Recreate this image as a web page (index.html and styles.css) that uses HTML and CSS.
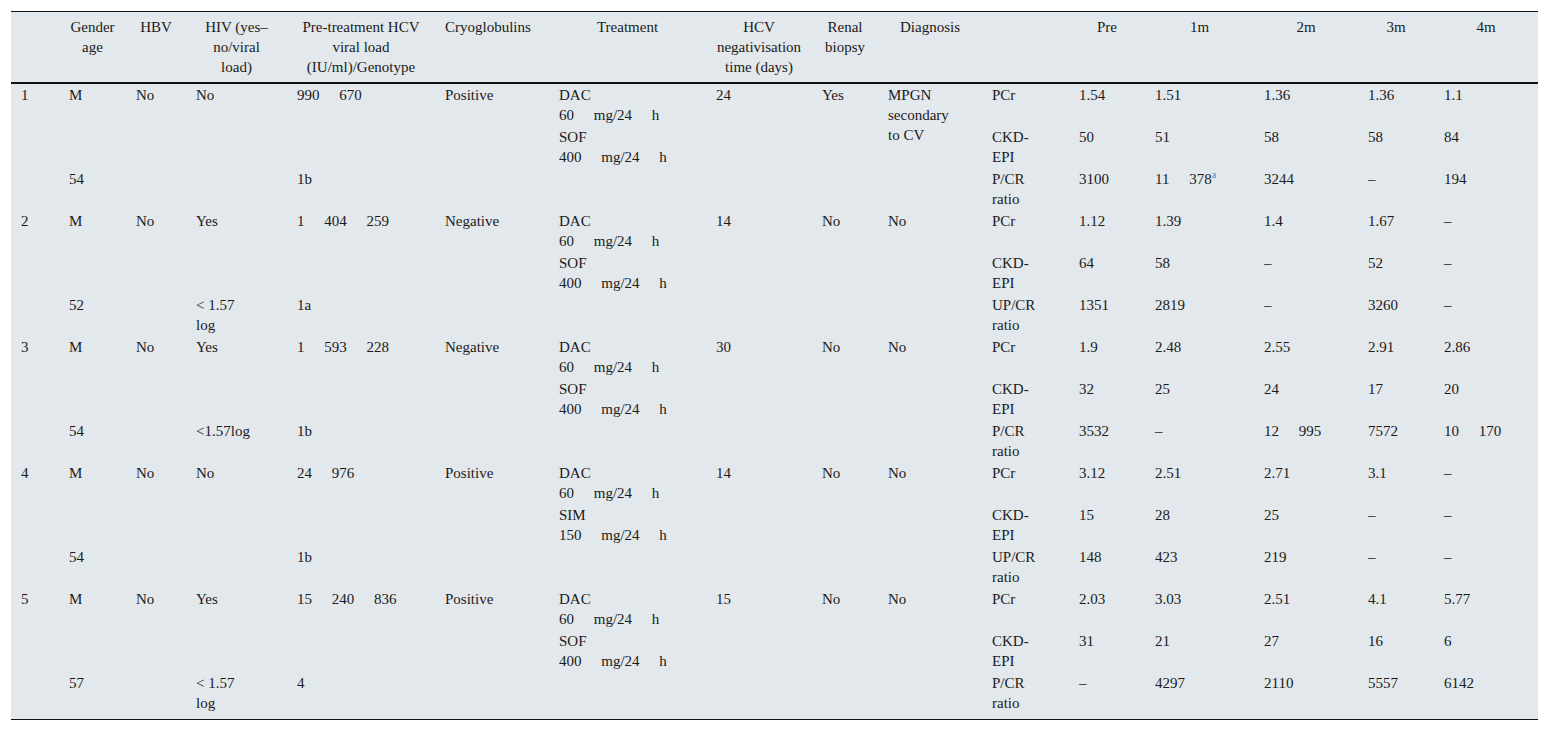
FILE: index.html
```html
<!DOCTYPE html>
<html lang="en">
<head>
<meta charset="utf-8">
<title>Table</title>
<link rel="stylesheet" href="styles.css">
</head>
<body>
<div class="wrap">
<table class="tbl">
<colgroup>
<col style="width:48px"><col style="width:67px"><col style="width:60px"><col style="width:101px"><col style="width:148px"><col style="width:114px"><col style="width:157px"><col style="width:106px"><col style="width:66px"><col style="width:104px"><col style="width:87px"><col style="width:76px"><col style="width:109px"><col style="width:104px"><col style="width:76px"><col style="width:104px">
</colgroup>
<thead>
<tr>
<th></th>
<th>Gender<br>age</th>
<th>HBV</th>
<th>HIV (yes–<br>no/viral<br>load)</th>
<th>Pre-treatment HCV<br>viral load<br>(IU/ml)/Genotype</th>
<th class="left">Cryoglobulins</th>
<th>Treatment</th>
<th>HCV<br>negativisation<br>time (days)</th>
<th>Renal<br>biopsy</th>
<th>Diagnosis</th>
<th></th>
<th>Pre</th>
<th>1m</th>
<th>2m</th>
<th>3m</th>
<th>4m</th>
</tr>
</thead>
<tbody>
<!-- Patient 1 -->
<tr>
<td>1</td><td>M</td><td>No</td><td>No</td><td class="sp">990 670</td><td>Positive</td><td class="sp">DAC<br>60 mg/24 h</td><td>24</td><td>Yes</td><td rowspan="2">MPGN<br>secondary<br>to CV</td><td>PCr</td><td>1.54</td><td>1.51</td><td>1.36</td><td>1.36</td><td>1.1</td>
</tr>
<tr>
<td></td><td></td><td></td><td></td><td></td><td></td><td class="sp">SOF<br>400 mg/24 h</td><td></td><td></td><td>CKD-<br>EPI</td><td>50</td><td>51</td><td>58</td><td>58</td><td>84</td>
</tr>
<tr>
<td></td><td>54</td><td></td><td></td><td>1b</td><td></td><td></td><td></td><td></td><td></td><td>P/CR<br>ratio</td><td>3100</td><td class="sp">11 378<sup class="ref">a</sup></td><td>3244</td><td>–</td><td>194</td>
</tr>
<!-- Patient 2 -->
<tr>
<td>2</td><td>M</td><td>No</td><td>Yes</td><td class="sp">1 404 259</td><td>Negative</td><td class="sp">DAC<br>60 mg/24 h</td><td>14</td><td>No</td><td>No</td><td>PCr</td><td>1.12</td><td>1.39</td><td>1.4</td><td>1.67</td><td>–</td>
</tr>
<tr>
<td></td><td></td><td></td><td></td><td></td><td></td><td class="sp">SOF<br>400 mg/24 h</td><td></td><td></td><td></td><td>CKD-<br>EPI</td><td>64</td><td>58</td><td>–</td><td>52</td><td>–</td>
</tr>
<tr>
<td></td><td>52</td><td></td><td>&lt; 1.57<br>log</td><td>1a</td><td></td><td></td><td></td><td></td><td></td><td>UP/CR<br>ratio</td><td>1351</td><td>2819</td><td>–</td><td>3260</td><td>–</td>
</tr>
<!-- Patient 3 -->
<tr>
<td>3</td><td>M</td><td>No</td><td>Yes</td><td class="sp">1 593 228</td><td>Negative</td><td class="sp">DAC<br>60 mg/24 h</td><td>30</td><td>No</td><td>No</td><td>PCr</td><td>1.9</td><td>2.48</td><td>2.55</td><td>2.91</td><td>2.86</td>
</tr>
<tr>
<td></td><td></td><td></td><td></td><td></td><td></td><td class="sp">SOF<br>400 mg/24 h</td><td></td><td></td><td></td><td>CKD-<br>EPI</td><td>32</td><td>25</td><td>24</td><td>17</td><td>20</td>
</tr>
<tr>
<td></td><td>54</td><td></td><td>&lt;1.57log</td><td>1b</td><td></td><td></td><td></td><td></td><td></td><td>P/CR<br>ratio</td><td>3532</td><td>–</td><td class="sp">12 995</td><td>7572</td><td class="sp">10 170</td>
</tr>
<!-- Patient 4 -->
<tr>
<td>4</td><td>M</td><td>No</td><td>No</td><td class="sp">24 976</td><td>Positive</td><td class="sp">DAC<br>60 mg/24 h</td><td>14</td><td>No</td><td>No</td><td>PCr</td><td>3.12</td><td>2.51</td><td>2.71</td><td>3.1</td><td>–</td>
</tr>
<tr>
<td></td><td></td><td></td><td></td><td></td><td></td><td class="sp">SIM<br>150 mg/24 h</td><td></td><td></td><td></td><td>CKD-<br>EPI</td><td>15</td><td>28</td><td>25</td><td>–</td><td>–</td>
</tr>
<tr>
<td></td><td>54</td><td></td><td></td><td>1b</td><td></td><td></td><td></td><td></td><td></td><td>UP/CR<br>ratio</td><td>148</td><td>423</td><td>219</td><td>–</td><td>–</td>
</tr>
<!-- Patient 5 -->
<tr>
<td>5</td><td>M</td><td>No</td><td>Yes</td><td class="sp">15 240 836</td><td>Positive</td><td class="sp">DAC<br>60 mg/24 h</td><td>15</td><td>No</td><td>No</td><td>PCr</td><td>2.03</td><td>3.03</td><td>2.51</td><td>4.1</td><td>5.77</td>
</tr>
<tr>
<td></td><td></td><td></td><td></td><td></td><td></td><td class="sp">SOF<br>400 mg/24 h</td><td></td><td></td><td></td><td>CKD-<br>EPI</td><td>31</td><td>21</td><td>27</td><td>16</td><td>6</td>
</tr>
<tr class="last">
<td></td><td>57</td><td></td><td>&lt; 1.57<br>log</td><td>4</td><td></td><td></td><td></td><td></td><td></td><td>P/CR<br>ratio</td><td>–</td><td>4297</td><td>2110</td><td>5557</td><td>6142</td>
</tr>
</tbody>
</table>
</div>
</body>
</html>
```
FILE: styles.css
```css
html, body {
  margin: 0;
  padding: 0;
  background: #ffffff;
}
.wrap {
  padding: 11px 11px 0 11px;
}
.tbl {
  width: 1527px;
  table-layout: fixed;
  border-collapse: collapse;
  background: #e3e8ec;
  font-family: "Liberation Serif", "Times New Roman", serif;
  font-size: 15px;
  line-height: 20px;
  color: #1b1b1b;
  border-top: 1px solid #111;
  border-bottom: 1px solid #111;
}
.tbl th {
  font-weight: normal;
  text-align: center;
  vertical-align: top;
  padding: 5px 10px;
  white-space: nowrap;
  border-bottom: 2px solid #111;
}
.tbl th.left {
  text-align: left;
}
.tbl td {
  text-align: left;
  vertical-align: top;
  padding: 1px 10px;
  white-space: nowrap;
}
.tbl tr.last td {
  padding-bottom: 6px;
}
.sp {
  word-spacing: 16px;
}
.ref {
  color: #3b8fd9;
  font-size: 10px;
  line-height: 0;
  vertical-align: 6px;
  word-spacing: 0;
}
```
